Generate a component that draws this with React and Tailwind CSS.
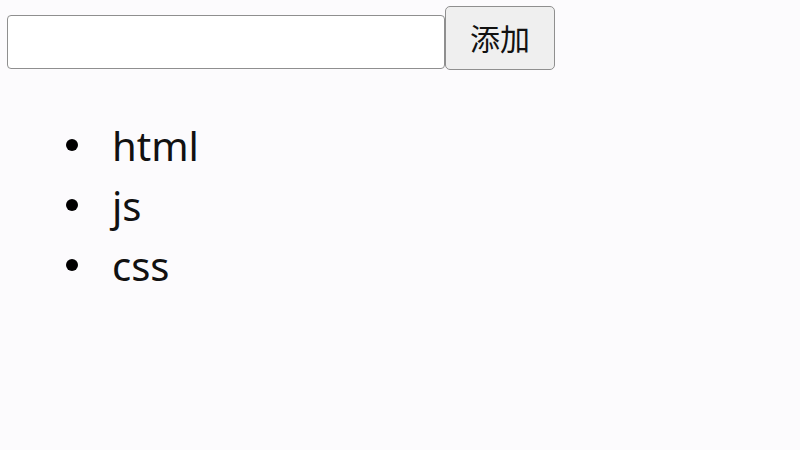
export default function App() {
  const items = ["html", "js", "css"];
  return (
    <div className="min-h-[450px] w-[800px] bg-[#fcfbfd] text-black" style={{ fontFamily: '"Noto Sans", "Noto Sans CJK SC", sans-serif' }}>
      <div className="flex items-end pl-[7px] pt-[6px]">
        <input
          type="text"
          className="mb-[1px] h-[54px] w-[438px] rounded-[4px] border border-[#8f8f8f] bg-white outline-none"
        />
        <button className="h-[64px] w-[110px] rounded-[5px] border border-[#8f8f8f] bg-[#efefef] text-[30px] text-[#111]">
          添加
        </button>
      </div>
      <ul className="mt-[46px] list-none pl-[66px] text-[40px] leading-[60px] text-[#111]">
        {items.map((t) => (
          <li key={t} className="flex items-center">
            <span className="mr-[34px] mt-[-2px] h-[12px] w-[12px] shrink-0 rounded-full bg-black" />
            <span>{t}</span>
          </li>
        ))}
      </ul>
    </div>
  );
}
